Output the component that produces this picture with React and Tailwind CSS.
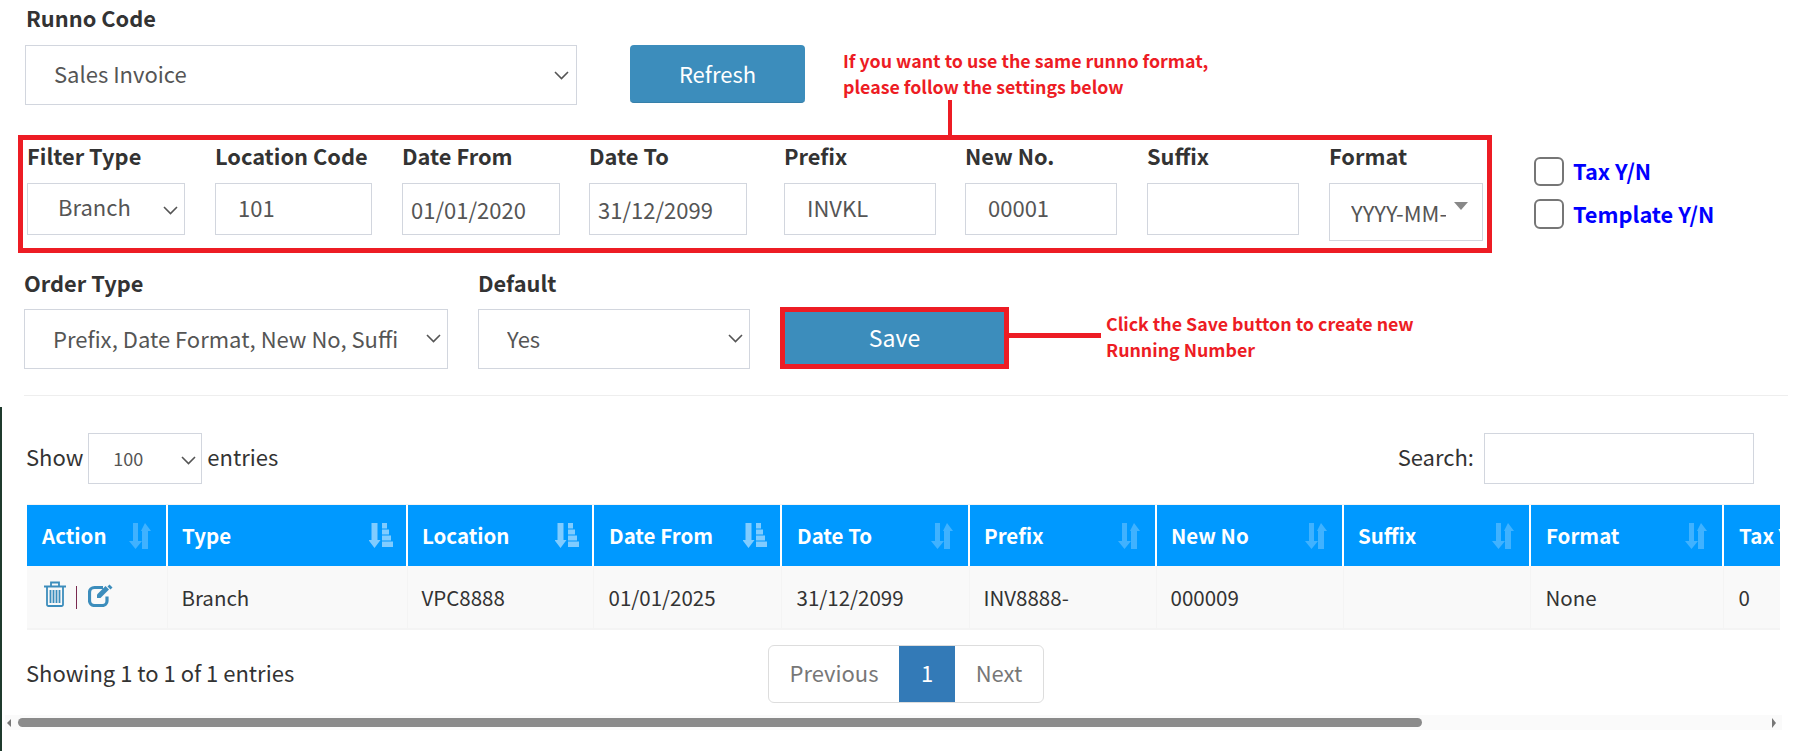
import React from "react";

const FONT = "font-['Noto_Sans_CJK_SC','Noto_Sans',sans-serif]";
const field = "border border-[#d2d6de] bg-white text-[#555] text-[22px] outline-none";

function Label({ children, className = "" }) {
  return <div className={`text-[21.8px] font-bold text-[#333] whitespace-nowrap ${className}`}>{children}</div>;
}

function Chevron({ className = "" }) {
  return (
    <svg width="15" height="9" viewBox="0 0 15 9" fill="none" stroke="#555" strokeWidth="1.6" className={`absolute pointer-events-none ${className}`}>
      <path d="M1 1l6.5 6.5L14 1" />
    </svg>
  );
}

function Select({ value, className = "", selectClass = "", chevron = "right-[9px] top-1/2 -mt-[4px]" }) {
  return (
    <div className={`relative shrink-0 ${className}`}>
      <select defaultValue={value} className={`${selectClass} appearance-none w-full h-full block`}>
        <option>{value}</option>
      </select>
      <Chevron className={chevron} />
    </div>
  );
}

function Field({ label, value, width, className = "", pad = "pl-[22px] pb-[5px]" }) {
  return (
    <div className={`shrink-0 ${width} ${className}`}>
      <Label className="h-[35px] -mt-[1px] leading-[16px]">{label}</Label>
      <input readOnly value={value} className={`${field} ${pad} w-full h-[52px] block`} />
    </div>
  );
}

function SortBoth() {
  return (
    <svg width="22" height="26" viewBox="0 0 22 26" className="shrink-0 opacity-25" fill="#fff">
      <path d="M4 0h5v18h4l-6.5 8L0 18h4z" />
      <path d="M13 8h-1L16 0l6 8h-3v18h-6z" />
    </svg>
  );
}

function SortAmount() {
  return (
    <svg width="24" height="25" viewBox="0 0 24 25" className="shrink-0 opacity-50 -mr-[2px]" fill="#fff">
      <path d="M2.5 0h6v17h3L5.5 25l-6-8h3z" />
      <rect x="13" y="0" width="5" height="5.5" />
      <rect x="13" y="6.5" width="7" height="5" />
      <rect x="13" y="12.5" width="9" height="5" />
      <rect x="13" y="18.5" width="11" height="5.5" />
    </svg>
  );
}

function Trash() {
  return (
    <svg width="22" height="26" viewBox="0 0 22 26" fill="none" stroke="#3c8dbc" strokeWidth="1.8">
      <path d="M0 5.5h22" strokeWidth="2" />
      <path d="M7 5V1.5h8V5" />
      <path d="M3 6v17.5a1.5 1.5 0 0 0 1.5 1.5h13a1.5 1.5 0 0 0 1.5-1.5V6" />
      <path d="M6.5 9v13M9.5 9v13M12.5 9v13M15.5 9v13" />
    </svg>
  );
}

function Edit() {
  return (
    <svg width="25" height="23" viewBox="0 0 25 23" fill="none">
      <path d="M19 12.5v4.5a4.5 4.5 0 0 1-4.5 4.5H6.5A5 5 0 0 1 1.5 16.5V8.5A5 5 0 0 1 6.5 3.5H15" stroke="#3c8dbc" strokeWidth="3.2" />
      <path d="M9 10.5l8.5-8.5 3.5 3.5-8.5 8.5H9z" fill="#3c8dbc" />
      <path d="M21.5 0.5l3 3-2 2-3-3z" fill="#3c8dbc" />
    </svg>
  );
}

const cols = [
  { name: "Action", w: "w-[140px]", icon: "both", value: "", pad: "pl-[15px]" },
  { name: "Type", w: "w-[240px]", icon: "amount", value: "Branch", pad: "pl-[14px]" },
  { name: "Location", w: "w-[186px]", icon: "amount", value: "VPC8888", pad: "pl-[14px]" },
  { name: "Date From", w: "w-[188px]", icon: "amount", value: "01/01/2025", pad: "pl-[15px]" },
  { name: "Date To", w: "w-[188px]", icon: "both", value: "31/12/2099", pad: "pl-[15px]" },
  { name: "Prefix", w: "w-[187px]", icon: "both", value: "INV8888-", pad: "pl-[14px]" },
  { name: "New No", w: "w-[187px]", icon: "both", value: "000009", pad: "pl-[14px]" },
  { name: "Suffix", w: "w-[187px]", icon: "both", value: "", pad: "pl-[14px]" },
  { name: "Format", w: "w-[193px]", icon: "both", value: "None", pad: "pl-[15px]" },
  { name: "Tax Y/N", w: "w-[120px]", icon: "both", value: "0", pad: "pl-[15px]" },
];

export default function App() {
  return (
    <div className={`${FONT} bg-white w-[1804px] h-[751px] overflow-hidden`}>
      <div className="pl-[25px] pt-[4px]">
        <Label className="ml-[1px] leading-[28px]">Runno Code</Label>
        <div className="flex items-start mt-[13px]">
          <Select value="Sales Invoice" className="w-[552px] h-[60px]" selectClass={`${field} pl-[28px] pb-[4px]`} chevron="right-[8px] top-1/2 -mt-[4px]" />
          <button className="ml-[53px] w-[175px] h-[58px] rounded-[4px] bg-[#3c8dbc] border-b border-[#367fa9] text-white text-[22px]">Refresh</button>
          <div className="ml-[38px] mt-[2px] text-[#ed1c24] text-[17.8px] font-bold leading-[26px] w-[420px]">
            If you want to use the same runno format,<br />please follow the settings below
          </div>
        </div>
      </div>

      <div className="flex mt-[30px] ml-[18px]">
        <div className="relative flex w-[1474px] h-[118px] border-[5px] border-[#ed1c24] pl-[4px] pt-[9px]">
          <div className="absolute -top-[40px] left-[925px] w-[4px] h-[35px] bg-[#ed1c24]" />
          <div className="shrink-0 w-[158px]">
            <Label className="h-[35px] -mt-[1px] leading-[16px]">Filter Type</Label>
            <Select value="Branch" className="w-full h-[52px]" selectClass={`${field} pl-[30px] pb-[5px]`} chevron="right-[7px] top-1/2 -mt-[3px]" />
          </div>
          <Field label="Location Code" value="101" width="w-[157px]" className="ml-[30px]" />
          <Field label="Date From" value="01/01/2020" width="w-[158px]" className="ml-[30px]" pad="pl-[8px] pb-[1px]" />
          <Field label="Date To" value="31/12/2099" width="w-[158px]" className="ml-[29px]" pad="pl-[8px] pb-[1px]" />
          <Field label="Prefix" value="INVKL" width="w-[152px]" className="ml-[37px]" />
          <Field label="New No." value="00001" width="w-[152px]" className="ml-[29px]" />
          <Field label="Suffix" value="" width="w-[152px]" className="ml-[30px]" />
          <div className="shrink-0 w-[154px] ml-[30px]">
            <Label className="h-[35px] -mt-[1px] leading-[16px]">Format</Label>
            <div className={`${field} h-[58px] pl-[21px] flex items-center relative`}>
              <span className="w-[95px] overflow-hidden whitespace-nowrap">YYYY-MM-DD</span>
              <div className="absolute right-[14px] top-[18px] border-x-[7px] border-x-transparent border-t-[8px] border-t-[#888]" />
            </div>
          </div>
        </div>
        <div className="ml-[42px] mt-[22px] flex flex-col gap-[13px]">
          <div className="flex items-center h-[29px]">
            <div className="w-[30px] h-[29px] rounded-[6px] border-2 border-[#767676] bg-white" />
            <span className="ml-[9px] text-[21.8px] font-bold text-[#0000ff] whitespace-nowrap">Tax Y/N</span>
          </div>
          <div className="flex items-center h-[30px]">
            <div className="w-[30px] h-[30px] rounded-[6px] border-2 border-[#767676] bg-white" />
            <span className="ml-[9px] text-[21.8px] font-bold text-[#0000ff] whitespace-nowrap">Template Y/N</span>
          </div>
        </div>
      </div>

      <div className="flex items-end mt-[16px] ml-[24px]">
        <div className="w-[424px]">
          <Label className="mb-[12px] leading-[28px]">Order Type</Label>
          <Select value="Prefix, Date Format, New No, Suffix" className="w-full h-[60px]" selectClass={`${field} pl-[28px] pr-[50px] pb-[2px]`} chevron="right-[7px] top-1/2 -mt-[5px]" />
        </div>
        <div className="w-[272px] ml-[30px]">
          <Label className="mb-[12px] leading-[28px]">Default</Label>
          <Select value="Yes" className="w-full h-[60px]" selectClass={`${field} pl-[28px] pb-[2px]`} chevron="right-[7px] top-1/2 -mt-[5px]" />
        </div>
        <button className="ml-[30px] w-[229px] h-[62px] border-[5px] border-[#ed1c24] bg-[#3c8dbc] text-white text-[23px] pb-[2px]">Save</button>
        <div className="self-end mb-[31px] w-[92px] h-[5px] bg-[#ed1c24]" />
        <div className="self-end mb-[7px] ml-[5px] text-[#ed1c24] text-[17.8px] font-bold leading-[26px] whitespace-nowrap">
          Click the Save button to create new<br />Running Number
        </div>
      </div>

      <div className="h-[1px] bg-[#eeeeee] mt-[26px] ml-[24px] w-[1764px]" />

      <div className="mt-[11px] h-[344px] border-l-2 border-[#1f3a2d] pt-[26px] pl-[24px]">
        <div className="flex items-center h-[51px] text-[22px] text-[#333] w-[1728px]">
          <span className="pb-[4px]">Show</span>
          <Select value="100" className="ml-[5px] w-[114px] h-[51px]" selectClass="border border-[#d2d6de] bg-white text-[#555] text-[18px] pl-[24px]" chevron="right-[6px] top-1/2 -mt-[3px]" />
          <span className="ml-[5px] pb-[4px]">entries</span>
          <span className="ml-auto pb-[4px]">Search:</span>
          <input readOnly className="ml-[10px] w-[270px] h-[51px] border border-[#d2d6de] bg-white outline-none" />
        </div>

        <div className="mt-[20px] ml-[1px] w-[1753px] overflow-hidden border-t border-[#f4f4f4]">
          <table className="table-fixed border-collapse w-[1816px] text-[20.5px]">
            <colgroup>
              {cols.map((c) => <col key={c.name} className={c.w} />)}
            </colgroup>
            <thead>
              <tr className="bg-[#0099ff] h-[61px]">
                {cols.map((c) => (
                  <th key={c.name} className={`${c.pad} pr-[15px] border-r-2 border-white text-left font-bold text-white whitespace-nowrap overflow-hidden`}>
                    <div className="flex items-center justify-between">
                      <span>{c.name}</span>
                      {c.icon === "both" ? <SortBoth /> : <SortAmount />}
                    </div>
                  </th>
                ))}
              </tr>
            </thead>
            <tbody>
              <tr className="bg-[#f9f9f9] h-[63px] border-b-2 border-[#f4f4f4]">
                {cols.map((c, i) => (
                  <td key={c.name} className={`${c.pad} border-r border-[#f4f4f4] text-[#333] whitespace-nowrap`}>
                    {i === 0 ? (
                      <div className="flex items-start pl-[2px] -mt-[4px]">
                        <Trash />
                        <div className="ml-[10px] mt-[5px] w-[1px] h-[23px] bg-[#7a2a50]" />
                        <div className="ml-[11px] mt-[3px]"><Edit /></div>
                      </div>
                    ) : c.value}
                  </td>
                ))}
              </tr>
            </tbody>
          </table>
        </div>

        <div className="flex items-start mt-[15px] w-[1730px] relative">
          <span className="mt-[13px] text-[22px] leading-[28px] text-[#333] w-[742px] shrink-0">Showing 1 to 1 of 1 entries</span>
          <div className="flex h-[58px] text-[22px] rounded-[6px] border border-[#dddddd] bg-white overflow-hidden">
            <span className="w-[130px] flex items-center justify-center text-[#777] pb-[3px]">Previous</span>
            <span className="w-[56px] flex items-center justify-center bg-[#337ab7] text-white pb-[3px]">1</span>
            <span className="w-[88px] flex items-center justify-center text-[#777] pb-[3px]">Next</span>
          </div>
        </div>

        <div className="mt-[12px] -ml-[21px] w-[1777px] h-[15px] bg-[#fafafa] flex items-center">
          <div className="ml-[2px] w-0 h-0 border-y-[4px] border-y-transparent border-r-[4px] border-r-[#777]" />
          <div className="ml-[7px] w-[1404px] h-[9px] rounded-full bg-[#8a8a8a]" />
          <div className="ml-auto mr-[6px] w-0 h-0 border-y-[5px] border-y-transparent border-l-[4px] border-l-[#777]" />
        </div>
      </div>
    </div>
  );
}
